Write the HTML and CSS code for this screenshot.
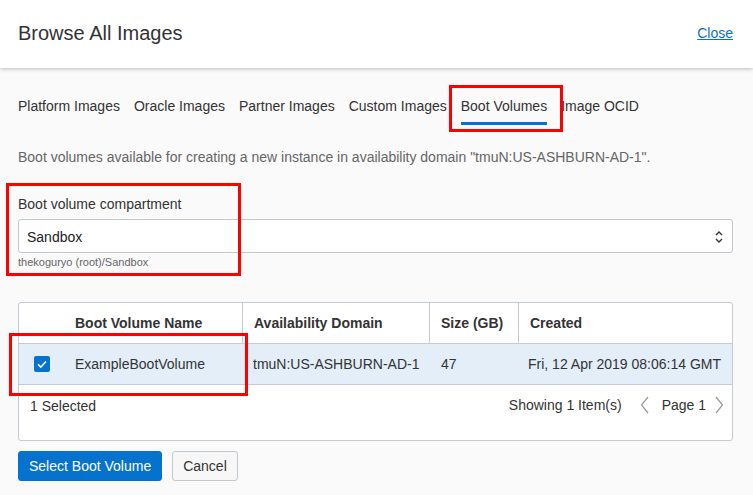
FILE: index.html
```html
<!DOCTYPE html>
<html>
<head>
<meta charset="utf-8">
<link rel="stylesheet" href="styles.css">
</head>
<body>
<div class="page">
  <header class="header">
    <h1 class="title">Browse All Images</h1>
    <a class="close" href="#">Close</a>
  </header>
  <main class="content">
    <nav class="tabs">
      <span class="tab">Platform Images</span>
      <span class="tab">Oracle Images</span>
      <span class="tab">Partner Images</span>
      <span class="tab">Custom Images</span>
      <span class="tab active">Boot Volumes</span>
      <span class="tab">Image OCID</span>
    </nav>
    <p class="desc">Boot volumes available for creating a new instance in availability domain "tmuN:US-ASHBURN-AD-1".</p>
    <label class="label">Boot volume compartment</label>
    <div class="select">
      <span>Sandbox</span>
      <svg class="updown" width="10" height="14" viewBox="0 0 10 14"><path d="M2 5 L5 2 L8 5" fill="none" stroke="#333" stroke-width="1.4"/><path d="M2 9 L5 12 L8 9" fill="none" stroke="#333" stroke-width="1.4"/></svg>
    </div>
    <div class="hint">thekoguryo (root)/Sandbox</div>
    <div class="table">
      <div class="row head">
        <div class="cell chk"></div>
        <div class="cell">Boot Volume Name</div>
        <div class="cell div">Availability Domain</div>
        <div class="cell div">Size (GB)</div>
        <div class="cell div">Created</div>
      </div>
      <div class="row data">
        <div class="cell chk"><span class="box"><svg width="16" height="16" viewBox="0 0 16 16"><path d="M4 8.2 L6.8 11 L12 5.5" fill="none" stroke="#fff" stroke-width="1.6"/></svg></span></div>
        <div class="cell">ExampleBootVolume</div>
        <div class="cell">tmuN:US-ASHBURN-AD-1</div>
        <div class="cell">47</div>
        <div class="cell">Fri, 12 Apr 2019 08:06:14 GMT</div>
      </div>
      <div class="foot">
        <span>1 Selected</span>
        <div class="pager">
          <span>Showing 1 Item(s)</span>
          <svg class="chev" width="10" height="18" viewBox="0 0 10 18"><path d="M8 1 L1.5 9 L8 17" fill="none" stroke="#999" stroke-width="1.2"/></svg>
          <span class="pg">Page 1</span>
          <svg class="chev last" width="10" height="18" viewBox="0 0 10 18"><path d="M2 1 L8.5 9 L2 17" fill="none" stroke="#999" stroke-width="1.2"/></svg>
        </div>
      </div>
    </div>
    <div class="actions">
      <button class="btn primary">Select Boot Volume</button>
      <button class="btn">Cancel</button>
    </div>
  </main>
  <div class="mark m1"></div>
  <div class="mark m2"></div>
  <div class="mark m3"></div>
</div>
</body>
</html>
```
FILE: styles.css
```css
* { box-sizing: border-box; }
html, body { margin: 0; padding: 0; }
body {
  background: #fafafa;
  font-family: "Liberation Sans", Arial, sans-serif;
  color: #333;
  font-size: 14px;
  width: 753px;
  height: 495px;
  overflow: hidden;
}
.page { position: relative; height: 495px; }
.header {
  height: 68px;
  background: #fff;
  box-shadow: 0 1px 4px rgba(0,0,0,0.25);
  display: flex;
  align-items: center;
  justify-content: space-between;
  padding: 0 20px 2px 18px;
  position: relative;
}
.title { margin: 0; font-size: 20px; font-weight: normal; color: #333; }
.close { color: #0572ce; font-size: 14px; text-decoration: underline; }
.content { padding: 0 20px 0 18px; }
.tabs { display: flex; gap: 14px; margin-top: 28px; }
.tab { line-height: 20px; padding-bottom: 6px; border-bottom: 3px solid transparent; color: #333; }
.tab.active { border-bottom-color: #0572ce; }
.desc { margin: 22px 0 0; line-height: 20px; color: #666; }
.label { display: block; margin-top: 27px; line-height: 20px; color: #333; }
.select {
  margin-top: 5px;
  height: 34px;
  background: #fff;
  border: 1px solid #c3c8cf;
  border-radius: 3px;
  display: flex;
  align-items: center;
  justify-content: space-between;
  padding: 1px 8px 0 8px;
  color: #222;
}
.hint { font-size: 11px; color: #666; line-height: 12px; margin-top: 3px; }
.table {
  margin-top: 34px;
  border: 1px solid #c5cbd2;
  border-radius: 3px;
  background: #fff;
  height: 139px;
}
.row {
  display: grid;
  grid-template-columns: 45px 178px 187px 89px 1fr;
  height: 40px;
}
.row.data {
  background: #e4eef8;
  border-top: 1px solid #c5cbd2;
  border-bottom: 1px solid #c5cbd2;
  height: 42px;
}
.cell { display: flex; align-items: center; padding-left: 11px; white-space: nowrap; }
.row.head .cell { font-weight: bold; }
.cell.div { border-left: 1px solid #c5cbd2; }
.cell.chk { padding-left: 15px; }
.box { width: 16px; height: 16px; background: #0572ce; border-radius: 2px; display: block; }
.box svg { display: block; }
.row.data .cell:nth-child(4) { padding-left: 12px; }
.row.data .cell:nth-child(5) { padding-left: 10px; }
.foot {
  display: flex;
  justify-content: space-between;
  align-items: center;
  height: 40px;
  padding: 0 8px 0 11px;
}
.foot > span { margin-top: 1px; }
.pager { display: flex; align-items: center; }
.chev { margin-left: 18px; }
.pg { margin-left: 12px; }
.chev.last { margin-left: 8px; }
.actions { display: flex; gap: 10px; margin-top: 10px; }
.btn {
  font-family: "Liberation Sans", Arial, sans-serif;
  font-size: 14px;
  height: 30px;
  padding: 0 10px;
  border-radius: 3px;
  border: 1px solid #c3c8cf;
  background: #f7f7f7;
  color: #333;
  white-space: nowrap;
}
.btn.primary {
  background: #0572ce;
  border-color: #0572ce;
  color: #fff;
}
.mark { position: absolute; border: 3px solid #f00; }
.m1 { left: 449px; top: 85px; width: 114px; height: 47px; }
.m2 { left: 6px; top: 183px; width: 235px; height: 93px; }
.m3 { left: 9px; top: 333px; width: 239px; height: 63px; }
```
